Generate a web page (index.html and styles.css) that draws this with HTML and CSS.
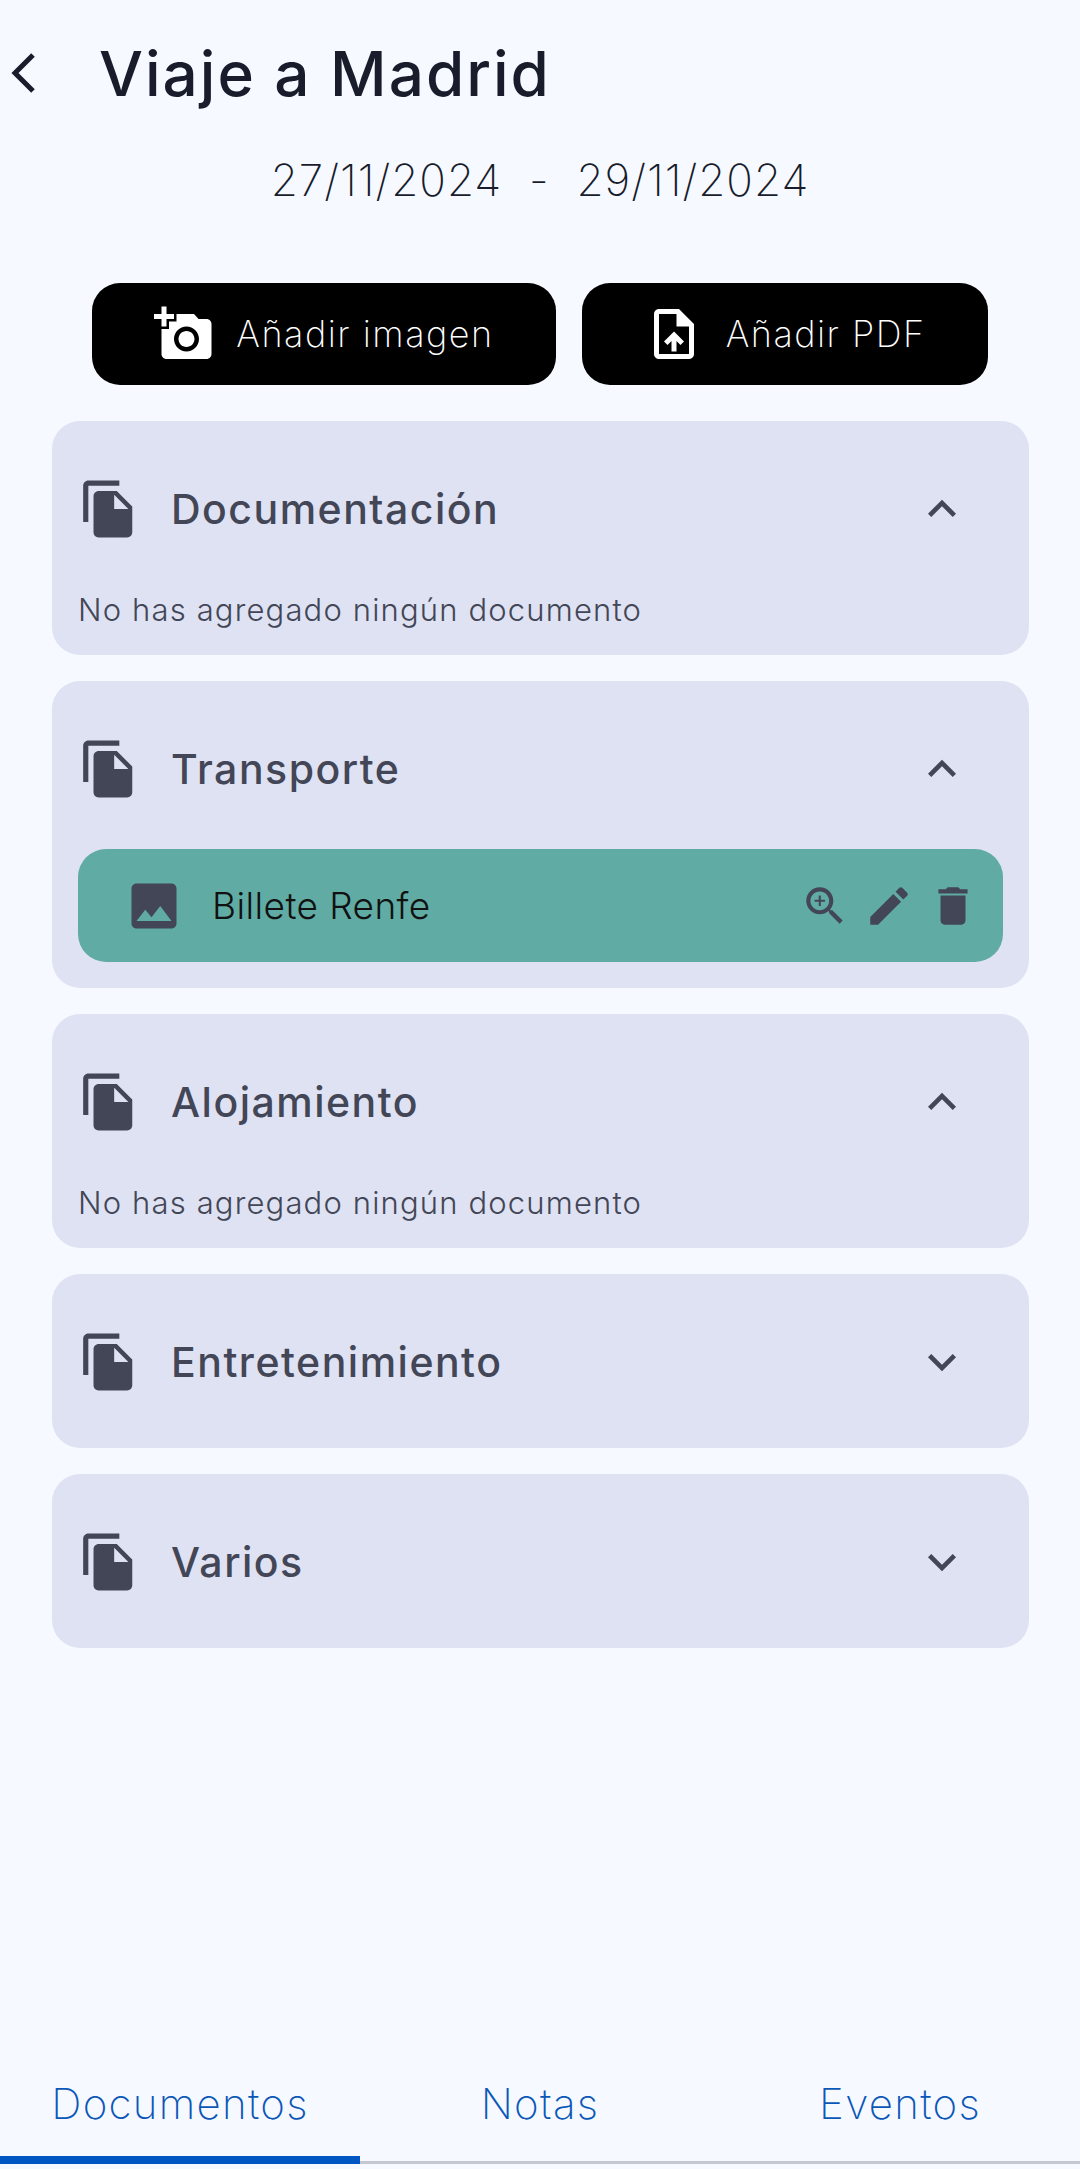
FILE: index.html
```html
<!DOCTYPE html>
<html lang="es">
<head>
    <meta charset="UTF-8">
    <title>Viaje a Madrid</title>
    <link rel="stylesheet" href="styles.css">
</head>
<body>

<div class="page">
    <!-- Cabecera -->
    <header class="top-bar">
        <svg class="back-icon" viewBox="0 0 28 44"><path d="M24 4 6 22l18 18"/></svg>
        <h1>Viaje a Madrid</h1>
    </header>
    <p class="dates">27/11/2024 &nbsp;-&nbsp; 29/11/2024</p>

    <!-- Botones -->
    <div class="actions">
        <button class="action-btn">
            <svg class="btn-icon" viewBox="0 0 24 24"><path d="M3 4V1h2v3h3v2H5v3H3V6H0V4h3zm3 6V7h3V4h7l1.83 2H21c1.1 0 2 .9 2 2v12c0 1.1-.9 2-2 2H5c-1.100 0-2-.9-2-2V10h3zm7 9c2.760 0 5-2.240 5-5s-2.240-5-5-5-5 2.240-5 5 2.240 5 5 5zm-3.200-5c0 1.770 1.430 3.200 3.200 3.200s3.200-1.430 3.200-3.200-1.430-3.200-3.200-3.200-3.200 1.430-3.200 3.200z"/></svg>
            Añadir imagen
        </button>
        <button class="action-btn">
            <svg class="btn-icon" viewBox="0 0 24 24"><path d="M14 2H6c-1.100 0-1.990.9-1.990 2L4 20c0 1.100.89 2 1.990 2H18c1.100 0 2-.9 2-2V8l-6-6zm4 18H6V4h7v5h5v11zM8 15.010l1.410 1.410L11 14.840V19h2v-4.160l1.590 1.590L16 15.010 12.010 11 8 15.010z"/></svg>
            Añadir PDF
        </button>
    </div>

    <!-- Categorías -->
    <main class="sections">
        <section class="card">
            <div class="card-head">
                <svg class="file-icon" viewBox="0 0 24 24"><use href="#file-copy"/></svg>
                <h2>Documentación</h2>
                <svg class="chevron" viewBox="0 0 24 24"><use href="#less"/></svg>
            </div>
            <p class="empty">No has agregado ningún documento</p>
        </section>

        <section class="card">
            <div class="card-head">
                <svg class="file-icon" viewBox="0 0 24 24"><use href="#file-copy"/></svg>
                <h2>Transporte</h2>
                <svg class="chevron" viewBox="0 0 24 24"><use href="#less"/></svg>
            </div>
            <div class="doc-item">
                <svg class="doc-icon" viewBox="0 0 24 24"><path d="M21 19V5c0-1.100-.9-2-2-2H5c-1.100 0-2 .9-2 2v14c0 1.100.9 2 2 2h14c1.100 0 2-.9 2-2zM8.500 13.500l2.500 3.010L14.500 12l4.500 6H5l3.500-4.500z"/></svg>
                <span class="doc-name">Billete Renfe</span>
                <div class="doc-tools">
                    <svg viewBox="0 0 24 24"><path d="M15.500 14h-.79l-.28-.27C15.410 12.590 16 11.110 16 9.500 16 5.910 13.090 3 9.500 3S3 5.910 3 9.500 5.910 16 9.500 16c1.610 0 3.090-.59 4.230-1.570l.27.28v.79l5 4.990L20.490 19l-4.990-5zm-6 0C7.010 14 5 11.990 5 9.500S7.010 5 9.500 5 14 7.010 14 9.500 11.990 14 9.500 14zM12 10h-2v2H9v-2H7V9h2V7h1v2h2v1z"/></svg>
                    <svg viewBox="0 0 24 24"><path d="M3 17.250V21h3.750L17.810 9.940l-3.750-3.750L3 17.250zM20.710 7.040c.39-.39.39-1.020 0-1.410l-2.340-2.340c-.39-.39-1.020-.39-1.410 0l-1.830 1.830 3.750 3.750 1.830-1.830z"/></svg>
                    <svg viewBox="0 0 24 24"><path d="M6 19c0 1.100.9 2 2 2h8c1.100 0 2-.9 2-2V7H6v12zM19 4h-3.500l-1-1h-5l-1 1H5v2h14V4z"/></svg>
                </div>
            </div>
        </section>

        <section class="card">
            <div class="card-head">
                <svg class="file-icon" viewBox="0 0 24 24"><use href="#file-copy"/></svg>
                <h2>Alojamiento</h2>
                <svg class="chevron" viewBox="0 0 24 24"><use href="#less"/></svg>
            </div>
            <p class="empty">No has agregado ningún documento</p>
        </section>

        <section class="card closed">
            <div class="card-head">
                <svg class="file-icon" viewBox="0 0 24 24"><use href="#file-copy"/></svg>
                <h2>Entretenimiento</h2>
                <svg class="chevron" viewBox="0 0 24 24"><use href="#more"/></svg>
            </div>
        </section>

        <section class="card closed">
            <div class="card-head">
                <svg class="file-icon" viewBox="0 0 24 24"><use href="#file-copy"/></svg>
                <h2>Varios</h2>
                <svg class="chevron" viewBox="0 0 24 24"><use href="#more"/></svg>
            </div>
        </section>
    </main>

    <!-- Pestañas -->
    <nav class="tabs">
        <a class="tab active">Documentos</a>
        <a class="tab">Notas</a>
        <a class="tab">Eventos</a>
    </nav>
</div>

<svg class="icon-defs" width="0" height="0">
    <defs>
        <path id="file-copy" d="M16 1H4c-1.100 0-2 .9-2 2v14h2V3h12V1zm-1 4l6 6v10c0 1.100-.9 2-2 2H7.990C6.890 23 6 22.100 6 21l.01-14c0-1.100.89-2 1.990-2h7zm-1 7h5.500L14 6.500V12z"/>
        <path id="less" d="M12 8l-6 6 1.410 1.410L12 10.830l4.590 4.580L18 14z"/>
        <path id="more" d="M16.590 8.590L12 13.170 7.410 8.590 6 10l6 6 6-6z"/>
    </defs>
</svg>

</body>
</html>
```

FILE: styles.css
```css
* {
    box-sizing: border-box;
}

body {
    margin: 0;
    background-color: #f6f9ff;
    font-family: Inter, "Liberation Sans", sans-serif;
}

.page {
    height: 2169px;
    padding-bottom: 5px;
    display: flex;
    flex-direction: column;
    overflow: hidden;
}

/* Cabecera */
.top-bar {
    height: 146px;
    display: flex;
    align-items: center;
}

.back-icon {
    width: 28px;
    height: 44px;
    margin-left: 9px;
    fill: none;
    stroke: #181c2b;
    stroke-width: 5;
}

.top-bar h1 {
    margin: 0 0 0 62px;
    font-size: 62px;
    font-weight: 500;
    color: #181c2b;
    letter-spacing: 2px;
}

.dates {
    margin: 0;
    height: 68px;
    line-height: 68px;
    text-align: center;
    font-size: 44px;
    font-weight: 200;
    color: #181c2b;
    letter-spacing: 1px;
}

/* Botones */
.actions {
    margin-top: 69px;
    display: flex;
    justify-content: center;
    gap: 26px;
}

.action-btn {
    height: 102px;
    padding: 0 62px;
    display: flex;
    align-items: center;
    gap: 22px;
    background-color: #000;
    color: #fff;
    border: none;
    border-radius: 28px;
    font-family: inherit;
    font-size: 36px;
    font-weight: 200;
    letter-spacing: 1.5px;
}

.btn-icon {
    width: 60px;
    height: 60px;
    fill: #fff;
}

/* Categorías */
.sections {
    flex: 1;
    margin-top: 36px;
    padding: 0 51px 0 52px;
    display: flex;
    flex-direction: column;
    gap: 26px;
}

.card {
    background-color: #dee2f2;
    border-radius: 28px;
    padding: 0 26px 25px;
}

.card.closed {
    padding-bottom: 6px;
}

.card-head {
    height: 168px;
    padding-top: 7px;
    display: flex;
    align-items: center;
}

.file-icon {
    width: 62px;
    height: 62px;
    fill: #434656;
}

.card-head h2 {
    flex: 1;
    margin: 0 0 0 31px;
    font-size: 41px;
    font-weight: 500;
    color: #434656;
    letter-spacing: 1.5px;
}

.chevron {
    width: 56px;
    height: 56px;
    margin-right: 33px;
    fill: #434656;
}

.empty {
    margin: 0;
    height: 41px;
    line-height: 42px;
    font-size: 31px;
    font-weight: 300;
    color: #434656;
    letter-spacing: 1.15px;
}

.doc-item {
    height: 113px;
    margin-bottom: 1px;
    padding: 0 25px 0 46px;
    display: flex;
    align-items: center;
    background-color: #60aca5;
    border-radius: 28px;
}

.doc-icon {
    width: 60px;
    height: 60px;
    fill: #434656;
}

.doc-name {
    flex: 1;
    margin-left: 28px;
    font-size: 37px;
    font-weight: 300;
    color: #111;
    letter-spacing: .4px;
}

.doc-tools {
    display: flex;
    gap: 14px;
}

.doc-tools svg {
    width: 50px;
    height: 50px;
    fill: #434656;
}

/* Pestañas */
.tabs {
    height: 105px;
    display: grid;
    grid-template-columns: repeat(3, 1fr);
    border-bottom: 3px solid #c4c6d0;
}

.tab {
    padding-top: 20px;
    display: flex;
    justify-content: center;
    align-items: flex-start;
    font-size: 42px;
    line-height: 50px;
    font-weight: 200;
    color: #0b57b8;
    letter-spacing: 1.3px;
}

.tab.active {
    border-bottom: 8px solid #0057c2;
    margin-bottom: -3px;
}

.icon-defs {
    position: absolute;
}
```
